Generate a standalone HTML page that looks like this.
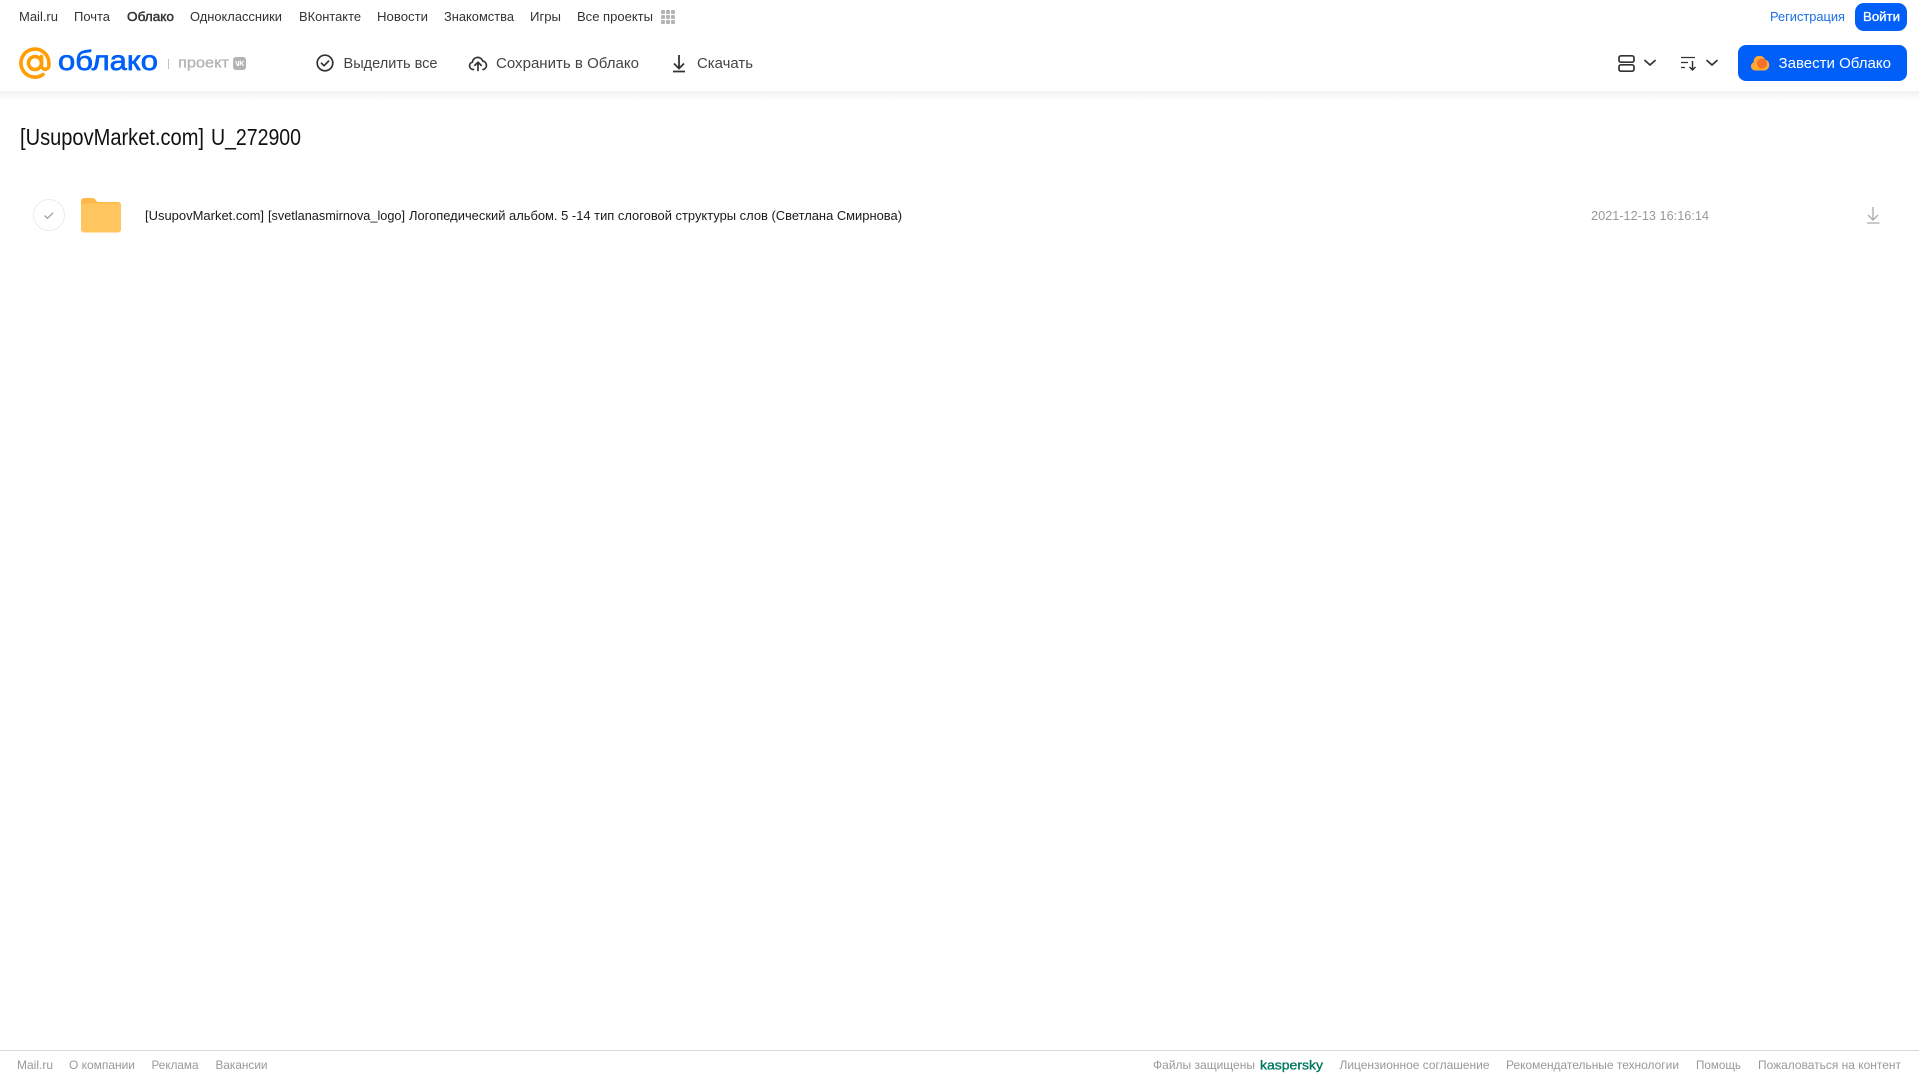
<!DOCTYPE html>
<html lang="ru"><head><meta charset="utf-8"><title>Облако</title>
<style>
html,body{margin:0;padding:0;background:#fff;width:1919px;height:1079px;overflow:hidden}
svg{display:block;position:absolute;left:0;top:0}
text{font-family:"Liberation Sans",Arial,sans-serif}
.n{font-size:13px;fill:#333}
.t{font-size:15px;fill:#444}
.f{font-size:12px;fill:#999}
</style></head><body>
<svg width="1919" height="1079" viewBox="0 0 1919 1079" xmlns="http://www.w3.org/2000/svg">
<defs><linearGradient id="sh" x1="0" y1="0" x2="0" y2="1"><stop offset="0" stop-color="#f2f2f2"/><stop offset="1" stop-color="#fff"/></linearGradient></defs>
<rect x="0" y="91" width="1919" height="10" fill="url(#sh)"/>

<!-- top nav -->
<text class="n" x="19" y="21" textLength="39" lengthAdjust="spacingAndGlyphs">Mail.ru</text>
<text class="n" x="74" y="21" textLength="36" lengthAdjust="spacingAndGlyphs">Почта</text>
<text class="n" x="127" y="21" textLength="47" lengthAdjust="spacingAndGlyphs" stroke="#333" stroke-width=".45">Облако</text>
<text class="n" x="190" y="21" textLength="92" lengthAdjust="spacingAndGlyphs">Одноклассники</text>
<text class="n" x="299" y="21" textLength="62" lengthAdjust="spacingAndGlyphs">ВКонтакте</text>
<text class="n" x="377" y="21" textLength="51" lengthAdjust="spacingAndGlyphs">Новости</text>
<text class="n" x="444" y="21" textLength="70" lengthAdjust="spacingAndGlyphs">Знакомства</text>
<text class="n" x="530" y="21" textLength="31" lengthAdjust="spacingAndGlyphs">Игры</text>
<text class="n" x="577" y="21" textLength="76" lengthAdjust="spacingAndGlyphs">Все проекты</text>
<g fill="#b4b4b4"><rect x="661" y="10" width="4" height="4" rx="1"/><rect x="666" y="10" width="4" height="4" rx="1"/><rect x="671" y="10" width="4" height="4" rx="1"/><rect x="661" y="15" width="4" height="4" rx="1"/><rect x="666" y="15" width="4" height="4" rx="1"/><rect x="671" y="15" width="4" height="4" rx="1"/><rect x="661" y="20" width="4" height="4" rx="1"/><rect x="666" y="20" width="4" height="4" rx="1"/><rect x="671" y="20" width="4" height="4" rx="1"/></g>

<text x="1770" y="21" font-size="13" fill="#1a6fe8" textLength="75" lengthAdjust="spacingAndGlyphs">Регистрация</text>
<rect x="1855" y="3" width="52" height="28" rx="9" fill="#005ff9"/>
<text x="1863" y="21" font-size="13" fill="#fff" stroke="#fff" stroke-width=".3" textLength="37" lengthAdjust="spacingAndGlyphs">Войти</text>

<!-- logo -->
<path d="M41.500 56.500V65.500a3.700 3.700 0 0 0 7.400 0V63A14 14 0 1 0 43 74.500" fill="none" stroke="#ff9e00" stroke-width="3.600" stroke-linecap="round"/>
<circle cx="35" cy="63" r="6.500" fill="none" stroke="#ff9e00" stroke-width="3.600"/>
<text x="58" y="70" font-size="28" fill="#005ff9" stroke="#005ff9" stroke-width=".7" textLength="100" lengthAdjust="spacingAndGlyphs">облако</text>
<rect x="168" y="59" width="1" height="10" fill="#c0c0c0"/>
<text x="178" y="67.500" font-size="15" fill="#b3b3b3" stroke="#b3b3b3" stroke-width=".3" textLength="51" lengthAdjust="spacingAndGlyphs">проект</text>
<rect x="233" y="57" width="13" height="13" rx="3" fill="#b3b3b3"/>
<path d="M235.500 61l2 4.500h1V61M243.500 61l-2.200 2.200 2.400 2.500M240.300 60.500v5" fill="none" stroke="#fff" stroke-width="1.100"/>

<!-- toolbar -->
<circle cx="325" cy="63" r="7.800" fill="none" stroke="#333" stroke-width="1.700"/>
<path d="M321.500 63.200l2.600 2.500 4.500-4.600" fill="none" stroke="#333" stroke-width="1.700" stroke-linecap="round" stroke-linejoin="round"/>
<text class="t" x="343.500" y="68" textLength="94" lengthAdjust="spacingAndGlyphs">Выделить все</text>

<path d="M473.500 69.500h-.5a3.700 3.700 0 0 1-.6-7.300 5.300 5.300 0 0 1 10.300-1.200 4.400 4.400 0 0 1 .8 8.500h-.5" fill="none" stroke="#333" stroke-width="1.700" stroke-linecap="round" stroke-linejoin="round"/>
<path d="M478 70.500V62.500M474.800 65.400l3.200-3.200 3.200 3.200" fill="none" stroke="#333" stroke-width="1.700" stroke-linecap="round" stroke-linejoin="round"/>
<text class="t" x="496" y="68" textLength="143" lengthAdjust="spacingAndGlyphs">Сохранить в Облако</text>

<path d="M679 55V68M674 63.500l5 5 5-5M673 71.500h12" fill="none" stroke="#333" stroke-width="1.800"/>
<text class="t" x="697" y="68" textLength="56" lengthAdjust="spacingAndGlyphs">Скачать</text>

<!-- right -->
<g fill="none" stroke="#333" stroke-width="1.700">
<rect x="1619" y="55.800" width="15" height="6.400" rx="2"/>
<rect x="1619" y="64.800" width="15" height="6.400" rx="2"/>
<path d="M1645 60.500l5 4.500 5-4.500" stroke-linecap="round" stroke-linejoin="round"/>
<path d="M1681 57.500h14M1681 62.500h7M1681 67.500h4" stroke-width="1.300"/>
<path d="M1692.500 61v9M1689.500 67l3 3 3-3" stroke-width="1.500"/>
<path d="M1707 60.500l5 4.500 5-4.500" stroke-linecap="round" stroke-linejoin="round"/>
</g>
<rect x="1738" y="45" width="169" height="36" rx="8" fill="#005ff9"/>
<path d="M1755 70.500a4.300 4.300 0 0 1-1.300-8.300 5.400 5.400 0 0 1 5.700-6.300 6 6 0 0 1 5.600 3.600 5.600 5.600 0 0 1-.4 11z" fill="#ffa930"/>
<circle cx="1762" cy="63.500" r="5" fill="#f4702b"/>
<text x="1778.500" y="68" font-size="15" fill="#fff" textLength="112.500" lengthAdjust="spacingAndGlyphs">Завести Облако</text>

<!-- title -->
<text x="20" y="145" font-size="23" fill="#111" textLength="184" lengthAdjust="spacingAndGlyphs">[UsupovMarket.com]</text>
<text x="211" y="145" font-size="23" fill="#111" textLength="90" lengthAdjust="spacingAndGlyphs">U_272900</text>

<!-- row -->
<circle cx="49" cy="215" r="15.500" fill="#fff" stroke="#ececec" stroke-width="1"/>
<path d="M44.500 215.500l3 2.800 5.500-5.500" fill="none" stroke="#a0a0a0" stroke-width="1.300"/>
<path d="M81 201a3 3 0 0 1 3-3h8.500c2 0 2.500 1 3.500 2.500 .6 .9 1.400 1.500 3 1.500h19a3 3 0 0 1 3 3v24a3 3 0 0 1-3 3H84a3 3 0 0 1-3-3z" fill="#ffb94a"/>
<path d="M81 206.500a3 3 0 0 1 3-3h34a3 3 0 0 1 3 3v23a3 3 0 0 1-3 3H84a3 3 0 0 1-3-3z" fill="#ffc65f"/>
<text x="145" y="220" font-size="13" fill="#1a1a1a" textLength="119" lengthAdjust="spacingAndGlyphs">[UsupovMarket.com]</text>
<text x="268" y="220" font-size="13" fill="#1a1a1a" textLength="137" lengthAdjust="spacingAndGlyphs">[svetlanasmirnova_logo]</text>
<text x="409" y="220" font-size="13" fill="#1a1a1a" textLength="493" lengthAdjust="spacingAndGlyphs">Логопедический альбом. 5 -14 тип слоговой структуры слов (Светлана Смирнова)</text>
<text x="1591" y="220" font-size="13" fill="#999" textLength="118" lengthAdjust="spacingAndGlyphs">2021-12-13 16:16:14</text>
<path d="M1873 207V220M1868 215l5 5 5-5M1867 223h12.500" fill="none" stroke="#aaa" stroke-width="1.300"/>

<!-- footer -->
<rect x="0" y="1050" width="1919" height="1" fill="#d8d8d8"/>
<text class="f" x="17" y="1069" textLength="36" lengthAdjust="spacingAndGlyphs">Mail.ru</text>
<text class="f" x="69" y="1069" textLength="66" lengthAdjust="spacingAndGlyphs">О компании</text>
<text class="f" x="151.500" y="1069" textLength="47" lengthAdjust="spacingAndGlyphs">Реклама</text>
<text class="f" x="215.500" y="1069" textLength="52" lengthAdjust="spacingAndGlyphs">Вакансии</text>
<text class="f" x="1153" y="1069" textLength="102" lengthAdjust="spacingAndGlyphs">Файлы защищены</text>
<text x="1260" y="1069.500" font-size="13" fill="#00775f" stroke="#00775f" stroke-width=".35" textLength="63" lengthAdjust="spacingAndGlyphs">kaspersky</text>
<text class="f" x="1339.500" y="1069" textLength="150" lengthAdjust="spacingAndGlyphs">Лицензионное соглашение</text>
<text class="f" x="1506" y="1069" textLength="173" lengthAdjust="spacingAndGlyphs">Рекомендательные технологии</text>
<text class="f" x="1696" y="1069" textLength="45" lengthAdjust="spacingAndGlyphs">Помощь</text>
<text class="f" x="1758" y="1069" textLength="143" lengthAdjust="spacingAndGlyphs">Пожаловаться на контент</text>
</svg>
</body></html>
